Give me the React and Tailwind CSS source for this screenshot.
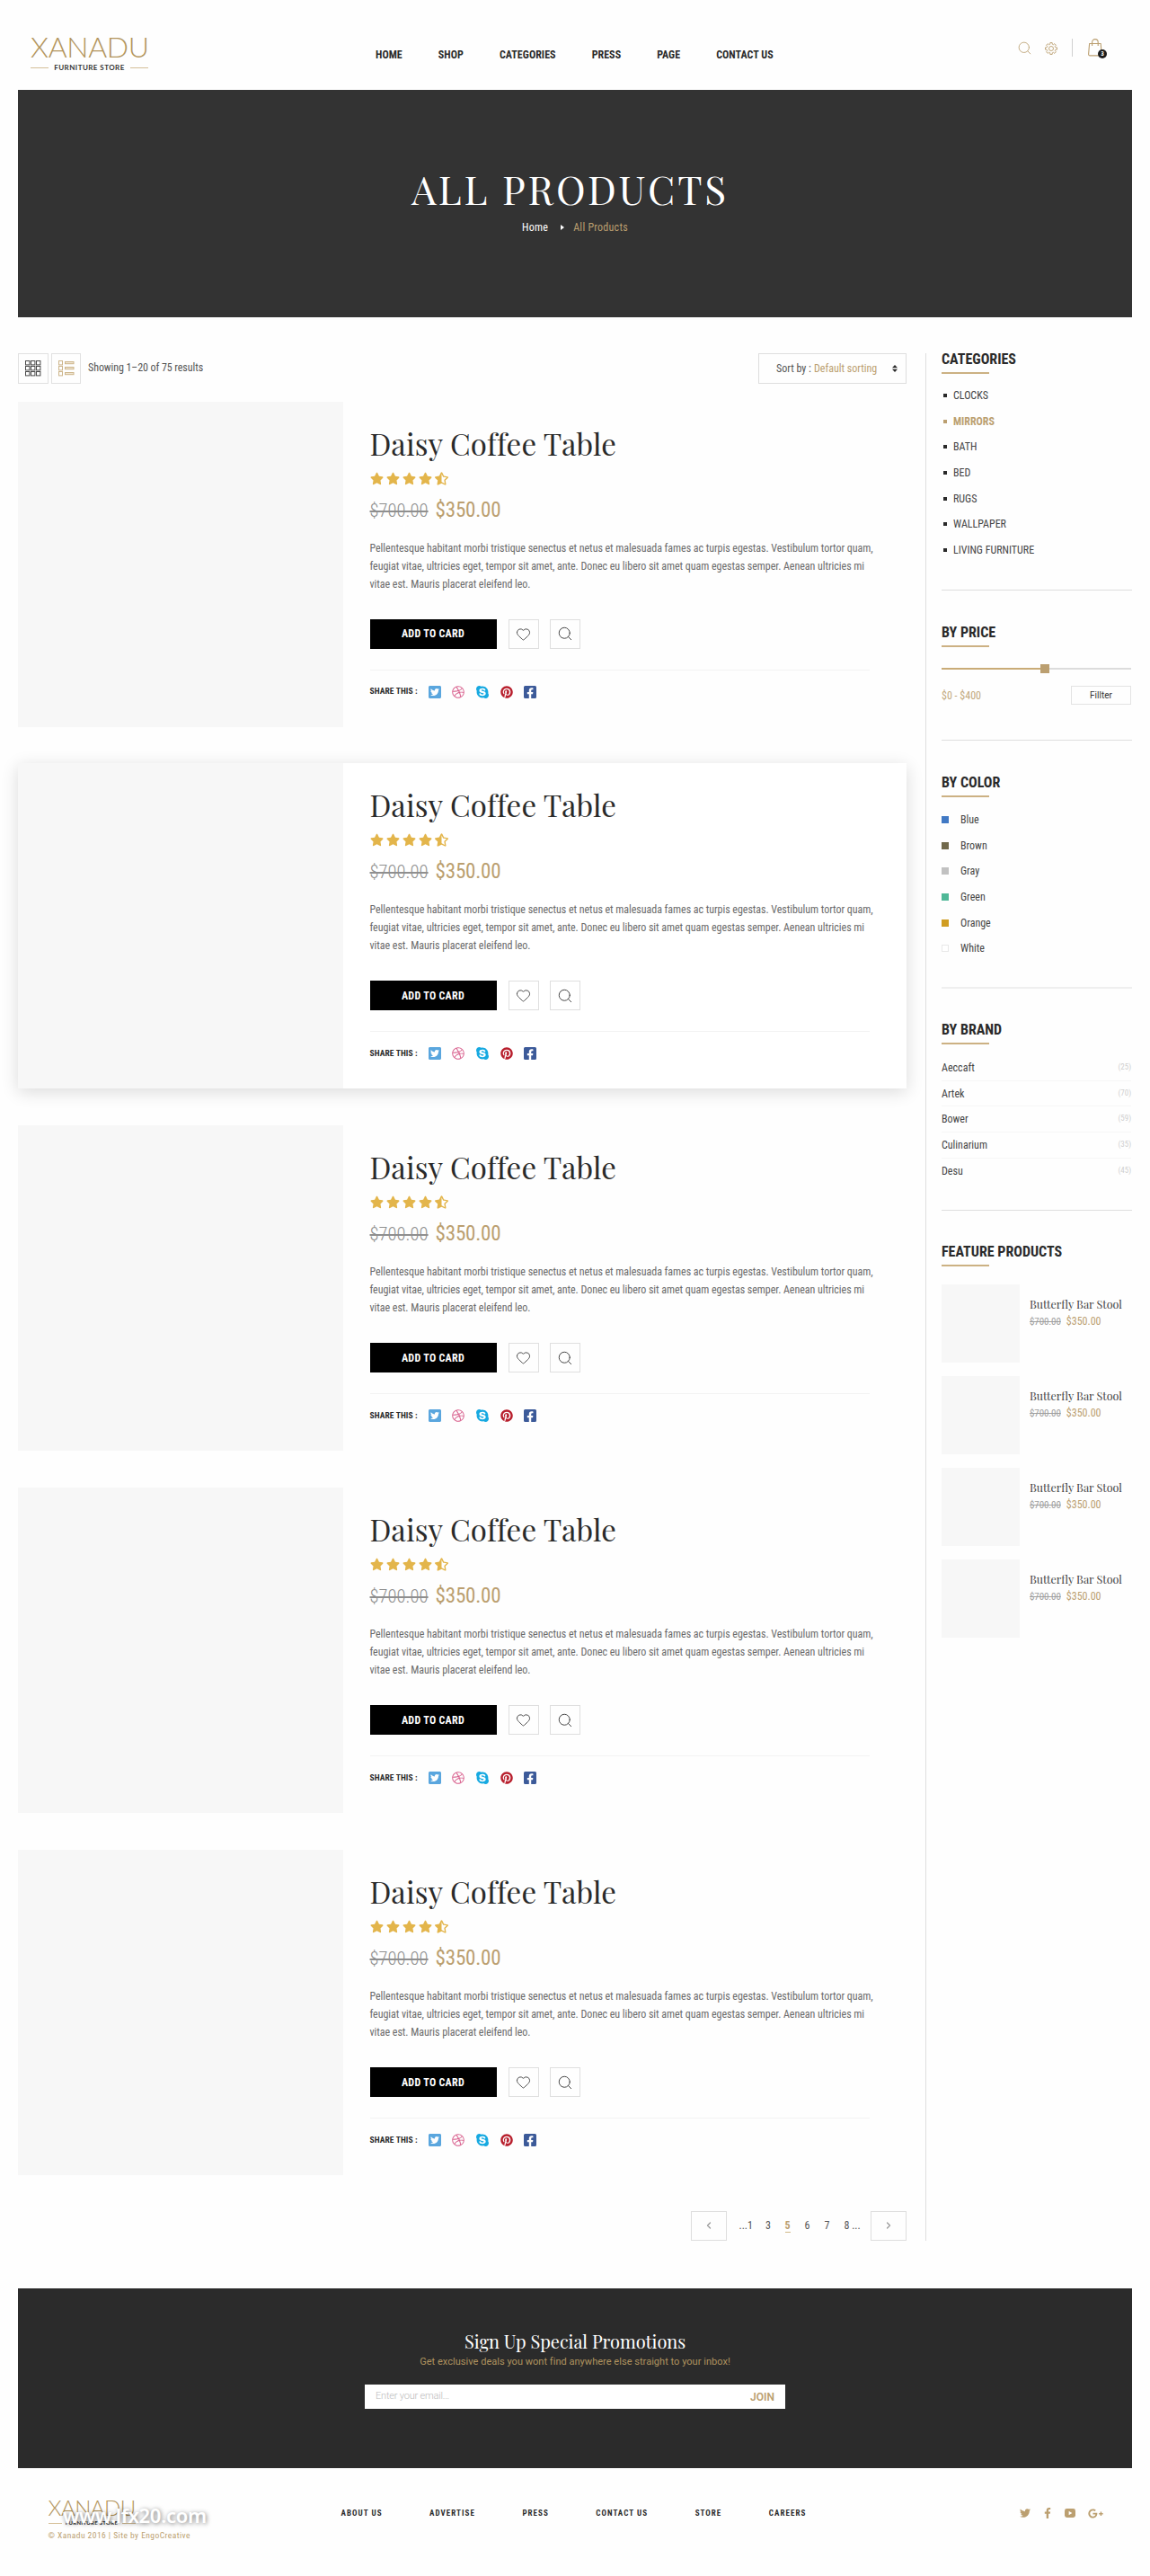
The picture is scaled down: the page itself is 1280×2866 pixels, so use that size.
import clsx from "clsx";
import { Heart, Search, ChevronLeft, ChevronRight } from "lucide-react";
import {
  FaStar,
  FaStarHalfAlt,
  FaTwitterSquare,
  FaDribbble,
  FaSkype,
  FaPinterest,
  FaFacebookSquare,
  FaTwitter,
  FaFacebookF,
  FaGooglePlusG,
} from "react-icons/fa";

const NAV = ["HOME", "SHOP", "CATEGORIES", "PRESS", "PAGE", "CONTACT US"];
const FOOTER_NAV = ["ABOUT US", "ADVERTISE", "PRESS", "CONTACT US", "STORE", "CAREERS"];
const CATEGORIES = ["CLOCKS", "MIRRORS", "BATH", "BED", "RUGS", "WALLPAPER", "LIVING FURNITURE"];

const COLORS = [
  { label: "Blue", swatch: "bg-[#4179c4]" },
  { label: "Brown", swatch: "bg-[#71694c]" },
  { label: "Gray", swatch: "bg-[#c1c1c1]" },
  { label: "Green", swatch: "bg-[#4fb897]" },
  { label: "Orange", swatch: "bg-[#d09d22]" },
  { label: "White", swatch: "bg-white border border-[#e8e8e8]" },
];

const BRANDS = [
  { name: "Aeccaft", count: 25 },
  { name: "Artek", count: 70 },
  { name: "Bower", count: 59 },
  { name: "Culinarium", count: 35 },
  { name: "Desu", count: 45 },
];

const PRODUCTS = [1, 2, 3, 4, 5].map((id) => ({ id, name: "Daisy Coffee Table", highlighted: id === 2 }));
const FEATURED = [1, 2, 3, 4];

const SHARE = [
  { id: "twitter", icon: FaTwitterSquare, cls: "text-[#5aa6de] text-[16px]" },
  { id: "dribbble", icon: FaDribbble, cls: "text-[#d9628f] text-[14px]" },
  { id: "skype", icon: FaSkype, cls: "text-[#16a9e1] text-[16px]" },
  { id: "pinterest", icon: FaPinterest, cls: "text-[#b81f2d] text-[14px]" },
  { id: "facebook", icon: FaFacebookSquare, cls: "text-[#3c5a99] text-[16px]" },
];

// eight-tooth outline, r is the outer radius of each tooth
const GEAR_PATH =
  Array.from({ length: 8 }, (_, i) => {
    const a = (i * Math.PI) / 4;
    return [[-0.25, 5], [-0.17, 6.6], [0.17, 6.6], [0.25, 5]]
      .map(([d, r]) => `${(7 + r * Math.sin(a + d)).toFixed(2)} ${(7 - r * Math.cos(a + d)).toFixed(2)}`)
      .join("L");
  })
    .map((p, i) => (i ? "L" : "M") + p)
    .join("") + "z";

function GearIcon() {
  return (
    <svg width="14" height="14" viewBox="0 0 14 14" fill="none" stroke="#bb9f70" strokeWidth="0.9" strokeLinejoin="round">
      <path d={GEAR_PATH} />
      <circle cx="7" cy="7" r="2.5" />
    </svg>
  );
}

function GridIcon() {
  const cells = [0.5, 6.5, 12.5];
  return (
    <svg width="18" height="18" viewBox="0 0 18 18" fill="none" stroke="#4a4a4a">
      {cells.map((y) => cells.map((x) => <rect key={`${x}-${y}`} x={x} y={y} width="4.4" height="4.4" />))}
    </svg>
  );
}

function ListIcon() {
  return (
    <svg width="18" height="18" viewBox="0 0 18 18" fill="none" stroke="#cdb58a">
      {[0.5, 6.5, 12.5].map((y) => (
        <g key={y}>
          <rect x="0.5" y={y} width="4" height="4.4" />
          <rect x="7.5" y={y + 1} width="9.5" height="2.2" fill="#efe5d2" />
        </g>
      ))}
    </svg>
  );
}

function BagIcon() {
  return (
    <svg width="16" height="20" viewBox="0 0 16 20" fill="none" stroke="#bb9f70" strokeWidth="1.1" strokeLinejoin="round">
      <path d="M1.6 5.5h12.6l.9 11.6c.1 1-.5 1.8-1.6 1.8H2.2c-1 0-1.7-.8-1.6-1.8z" />
      <path d="M4.6 8V4c0-2 1.4-3.4 3.3-3.4S11.2 2 11.2 4v4" />
    </svg>
  );
}

function YoutubeIcon() {
  return (
    <svg width="12" height="10" viewBox="0 0 12 10">
      <rect width="12" height="10" rx="2.4" fill="#bb9f70" />
      <path d="M4.6 2.7v4.6L8.4 5z" fill="#fff" />
    </svg>
  );
}

function Header() {
  return (
    <header className="flex h-[100px]">
      <div className="w-[398px] pl-[14px] pt-[36px]">
        <div className="w-[131px]">
          <div className="h-8 whitespace-nowrap font-['Lato'] text-[32px] font-light leading-8 tracking-[-0.3px] text-[#b3955c]">XANADU</div>
          <div className="mt-px flex h-3 items-center justify-between">
            <span className="h-px w-5 bg-[#d5bf98]" />
            <span className="font-['Lato'] text-[8px] font-bold leading-3 tracking-[0.45px] text-[#333]">FURNITURE STORE</span>
            <span className="h-px w-5 bg-[#d5bf98]" />
          </div>
        </div>
      </div>
      <nav className="mt-[51px] flex h-5 gap-10">
        {NAV.map((item) => (
          <a key={item} className="text-[12px] font-bold leading-5 tracking-[0.05px] text-[#2a2a2a]">{item}</a>
        ))}
      </nav>
      <div className="ml-auto mr-[28px] mt-[43px] flex h-5 items-center text-[#bb9f70]">
        <Search className="mt-[1px] h-[17px] w-[17px]" strokeWidth={1.2} />
        <span className="ml-[14px] mt-[1px]"><GearIcon /></span>
        <span className="ml-[16px] h-5 w-px bg-[#d0d0d0]" />
        <span className="relative ml-[17px] h-5 w-[21px]">
          <BagIcon />
          <span className="absolute left-[11px] top-[12px] h-[10px] w-[10px] rounded-full bg-[#1b1b1b] text-center text-[7px] font-bold leading-[10px] text-white">3</span>
        </span>
      </div>
    </header>
  );
}

function Hero() {
  return (
    <section className="flex h-[253px] flex-col items-center bg-[#333] pt-[80px]">
      <h1 className="pr-[11px] font-['Playfair_Display',serif] text-[44px] leading-[60px] tracking-[2.85px] text-white">ALL PRODUCTS</h1>
      <div className="mt-[3px] flex h-5 items-center text-[12px] leading-5 tracking-[0.25px]">
        <span className="text-white">Home</span>
        <svg className="ml-[14px] mr-[10px]" width="4" height="6" viewBox="0 0 4 6">
          <path d="M0 0l4 3-4 3z" fill="#fff" />
        </svg>
        <span className="text-[#bb9f70]">All Products</span>
      </div>
    </section>
  );
}

function Toolbar() {
  return (
    <div className="flex h-[34px] items-center text-[12px] text-[#555]">
      <button className="flex h-[34px] w-[34px] items-center justify-center border border-[#e1e1e1]"><GridIcon /></button>
      <button className="ml-[3px] flex h-[34px] w-[33px] items-center justify-center border border-[#e1e1e1]"><ListIcon /></button>
      <span className="ml-2 pb-[2px] tracking-[-0.07px]">Showing 1–20 of 75 results</span>
      <div className="ml-auto flex h-[34px] w-[165px] items-center border border-[#dedede] pl-[19px] pr-[9px]">
        <span>Sort by :</span>
        <span className="ml-[3px] text-[#bb9f70]">Default sorting</span>
        <svg className="ml-auto" width="6" height="8" viewBox="0 0 6 8" fill="#2a2a2a">
          <path d="M0 3.2L3 0l3 3.2zM0 4.8h6L3 8z" />
        </svg>
      </div>
    </div>
  );
}

function ProductCard({ product }) {
  return (
    <article className={clsx("mb-[40.9px] flex h-[362px]", product.highlighted && "bg-white shadow-[0_4px_18px_rgba(0,0,0,0.14)]")}>
      <div className="w-[362px] shrink-0 bg-[#f7f7f7]" />
      <div className="flex-1 pl-[29.5px] pt-[26px]">
        <h2 className="h-10 whitespace-nowrap font-['Playfair_Display',serif] text-[33px] leading-10 tracking-[0.14px] text-[#2a2a2a]">{product.name}</h2>
        <div className="mt-[11.5px] flex h-4 items-center gap-[3px] text-[15px] text-[#e3b54b]">
          <FaStar /><FaStar /><FaStar /><FaStar /><FaStarHalfAlt />
        </div>
        <div className="mt-[13.5px] flex h-7 items-baseline leading-7">
          <span className="text-[20.5px] font-light tracking-[0.05px] text-[#8f8f8f] line-through">$700.00</span>
          <span className="ml-[8px] text-[23px] tracking-[-0.2px] text-[#bb9f70]">$350.00</span>
        </div>
        <p className="mt-[18px] whitespace-nowrap text-[12px] leading-5 tracking-[-0.04px] text-[#6a6a6a]">
          Pellentesque habitant morbi tristique senectus et netus et malesuada fames ac turpis egestas. Vestibulum tortor quam,
          <br />
          feugiat vitae, ultricies eget, tempor sit amet, ante. Donec eu libero sit amet quam egestas semper. Aenean ultricies mi
          <br />
          vitae est. Mauris placerat eleifend leo.
        </p>
        <div className="mt-[29px] flex h-[33px]">
          <button className="w-[141px] bg-black text-[12px] font-bold tracking-[0.3px] text-white">ADD TO CARD</button>
          <button className="ml-[13px] flex w-[34px] items-center justify-center border border-[#dfdfdf] text-[#444]"><Heart className="h-[17px] w-[17px]" strokeWidth={1.3} /></button>
          <button className="ml-[12px] flex w-[34px] items-center justify-center border border-[#dfdfdf] text-[#444]"><Search className="h-[18px] w-[18px]" strokeWidth={1.3} /></button>
        </div>
        <div className="mt-[23px] flex h-[49px] w-[556px] items-center border-t border-[#f3f3f3]">
          <span className="w-[65px] text-[9.5px] font-bold tracking-[0.1px] text-[#2a2a2a]">SHARE THIS :</span>
          <div className="flex gap-[12.7px]">
            {SHARE.map((s) => {
              const Icon = s.icon;
              return (
                <span key={s.id} className="flex h-4 w-[14px] items-center justify-center">
                  <Icon className={clsx("shrink-0", s.cls)} />
                </span>
              );
            })}
          </div>
        </div>
      </div>
    </article>
  );
}

function Pagination() {
  return (
    <div className="-mt-px flex h-[33px] items-center justify-end text-[12px] text-[#555]">
      <button className="mr-[14px] flex h-[33px] w-10 items-center justify-center border border-[#dedede] text-[#999]"><ChevronLeft className="h-3 w-3" strokeWidth={2.5} /></button>
      <span className="w-[29.5px]">...1</span>
      <span className="w-[21.5px]">3</span>
      <span className="w-[22px]"><span className="border-b border-[#d1b988] font-bold text-[#bb9f70]">5</span></span>
      <span className="w-[22px]">6</span>
      <span className="w-[22px]">7</span>
      <span className="w-[29.5px]">8 ...</span>
      <button className="flex h-[33px] w-10 items-center justify-center border border-[#dedede] text-[#999]"><ChevronRight className="h-3 w-3" strokeWidth={2.5} /></button>
    </div>
  );
}

function SideTitle({ children }) {
  return (
    <>
      <h3 className="h-5 whitespace-nowrap text-[16px] font-bold leading-5 text-[#2a2a2a]">{children}</h3>
      <div className="mt-[4px] h-[2px] w-[53px] bg-[#ccb183]" />
    </>
  );
}

function Sidebar() {
  return (
    <aside className="ml-[21px] h-[2100px] w-[230px] border-l border-[#dedede] pl-[17px] text-[12px] text-[#444]">
      <div className="-mt-[3px] h-[267px] border-b border-[#dedede]">
        <SideTitle>CATEGORIES</SideTitle>
        <ul className="mt-[9.5px]">
          {CATEGORIES.map((c) => {
            const active = c === "MIRRORS";
            return (
              <li key={c} className={clsx("flex h-[28.7px] items-center pl-[2px]", active ? "font-bold text-[#bb9f70]" : "text-[#444]")}>
                <span className={clsx("mr-[7px] h-[4px] w-[4px]", active ? "bg-[#bb9f70]" : "bg-[#2a2a2a]")} />
                {c}
              </li>
            );
          })}
        </ul>
      </div>

      <div className="h-[167px] border-b border-[#dedede] pt-[37px]">
        <SideTitle>BY PRICE</SideTitle>
        <div className="mt-[19px] flex h-[10px] items-center">
          <span className="h-[2px] w-[110px] bg-[#c9ab77]" />
          <span className="h-[10px] w-[10px] bg-[#bb9f70]" />
          <span className="h-[2px] w-[91px] bg-[#dcdcdc]" />
        </div>
        <div className="mt-[14px] flex h-[21px] w-[211px] items-center justify-between">
          <span className="text-[#c2a87c]">$0 - $400</span>
          <button className="h-[21px] w-[67px] border border-[#e3e3e3] font-['Roboto'] text-[10px] text-[#333]">Fillter</button>
        </div>
      </div>

      <div className="h-[276px] border-b-2 border-[#efefef] pt-[37px]">
        <SideTitle>BY COLOR</SideTitle>
        <ul className="mt-[10.5px]">
          {COLORS.map((c) => (
            <li key={c.label} className="flex h-[28.7px] items-center">
              <span className={clsx("mr-[13px] h-[8px] w-[8px]", c.swatch)} />
              {c.label}
            </li>
          ))}
        </ul>
      </div>

      <div className="h-[247px] border-b border-[#dedede] pt-[36px]">
        <SideTitle>BY BRAND</SideTitle>
        <ul className="mt-[12px]">
          {BRANDS.map((b) => (
            <li key={b.name} className="flex h-[28.7px] w-[211px] items-center justify-between border-b border-[#f6f6f6] last:border-b-0">
              <span>{b.name}</span>
              <span className="text-[9px] text-[#cfcfcf]">({b.count})</span>
            </li>
          ))}
        </ul>
      </div>

      <div className="pt-[36px]">
        <SideTitle>FEATURE PRODUCTS</SideTitle>
        <div className="mt-[20px] flex flex-col gap-[15px]">
          {FEATURED.map((id) => (
            <div key={id} className="flex">
              <div className="h-[87px] w-[87px] bg-[#f7f7f7]" />
              <div className="pl-[11px] pt-[12px]">
                <div className="h-5 whitespace-nowrap font-['Playfair_Display',serif] text-[12.5px] leading-5 text-[#444]">Butterfly Bar Stool</div>
                <div className="-mt-px flex h-5 items-baseline leading-5">
                  <span className="text-[11px] tracking-[-0.1px] text-[#a0a0a0] line-through">$700.00</span>
                  <span className="ml-[6px] text-[12px] text-[#bb9f70]">$350.00</span>
                </div>
              </div>
            </div>
          ))}
        </div>
      </div>
    </aside>
  );
}

function Promo() {
  return (
    <section className="mt-[53px] flex h-[200px] flex-col items-center bg-[#2b2b2b] pt-[45px]">
      <h2 className="font-['Playfair_Display',serif] text-[20px] leading-7 tracking-[-0.05px] text-white">Sign Up Special Promotions</h2>
      <p className="mt-px font-['Roboto'] text-[11px] leading-4 tracking-[0.03px] text-[#b0935f]">Get exclusive deals you wont find anywhere else straight to your inbox!</p>
      <div className="mt-[17px] flex h-[27px] w-[468px] items-center justify-between bg-white px-3 font-['Roboto']">
        <span className="text-[11px] font-light tracking-[-0.2px] text-[#bbb]">Enter your email...</span>
        <span className="text-[12px] font-semibold text-[#bb9f70]">JOIN</span>
      </div>
    </section>
  );
}

function Footer() {
  return (
    <footer className="relative flex h-[120px]">
      <div className="w-[359.5px] pl-[33.5px] pt-[32px]">
        <div className="w-[97px]">
          <div className="h-6 whitespace-nowrap font-['Lato'] text-[24px] font-light leading-6 tracking-[-0.5px] text-[#b3955c]">XANADU</div>
          <div className="flex h-[10px] items-center justify-between">
            <span className="h-px w-[15px] bg-[#d5bf98]" />
            <span className="whitespace-nowrap font-['Lato'] text-[6px] font-bold leading-[10px] tracking-[0.3px] text-[#333]">FURNITURE STORE</span>
            <span className="h-px w-[15px] bg-[#d5bf98]" />
          </div>
        </div>
        <div className="mt-px whitespace-nowrap text-[9.5px] leading-4 tracking-[0.45px] text-[#bb9f70]">© Xanadu 2016 | Site by EngoCreative</div>
      </div>
      <nav className="mt-[40px] flex h-5 gap-[52.5px]">
        {FOOTER_NAV.map((item) => (
          <a key={item} className="text-[9px] font-bold leading-5 tracking-[1.05px] text-[#2a2a2a]">{item}</a>
        ))}
      </nav>
      <div className="ml-auto mr-[32px] mt-[40px] flex h-5 items-center text-[#bb9f70]">
        <FaTwitter className="text-[12px]" />
        <FaFacebookF className="ml-[13.5px] text-[12px]" />
        <span className="ml-[13px]"><YoutubeIcon /></span>
        <FaGooglePlusG className="ml-[14px] text-[17px]" />
      </div>
      {/* site stamp sits over the footer logo */}
      <div className="absolute left-[50px] top-[36px] font-['Noto_Sans'] text-[22px] font-semibold leading-8 tracking-[-0.3px] text-white [text-shadow:1px_1px_5px_rgba(0,0,0,0.55)]">www.lfx20.com</div>
    </footer>
  );
}

export default function App() {
  return (
    <div className="h-[2866px] w-[1280px] bg-[#fefefe] px-5 font-['Roboto_Condensed','Roboto',sans-serif]">
      <Header />
      <Hero />
      <main className="flex pt-10">
        <div className="w-[989px]">
          <Toolbar />
          <div className="mt-[19.5px]">
            {PRODUCTS.map((p) => <ProductCard key={p.id} product={p} />)}
          </div>
          <Pagination />
        </div>
        <Sidebar />
      </main>
      <Promo />
      <Footer />
    </div>
  );
}
